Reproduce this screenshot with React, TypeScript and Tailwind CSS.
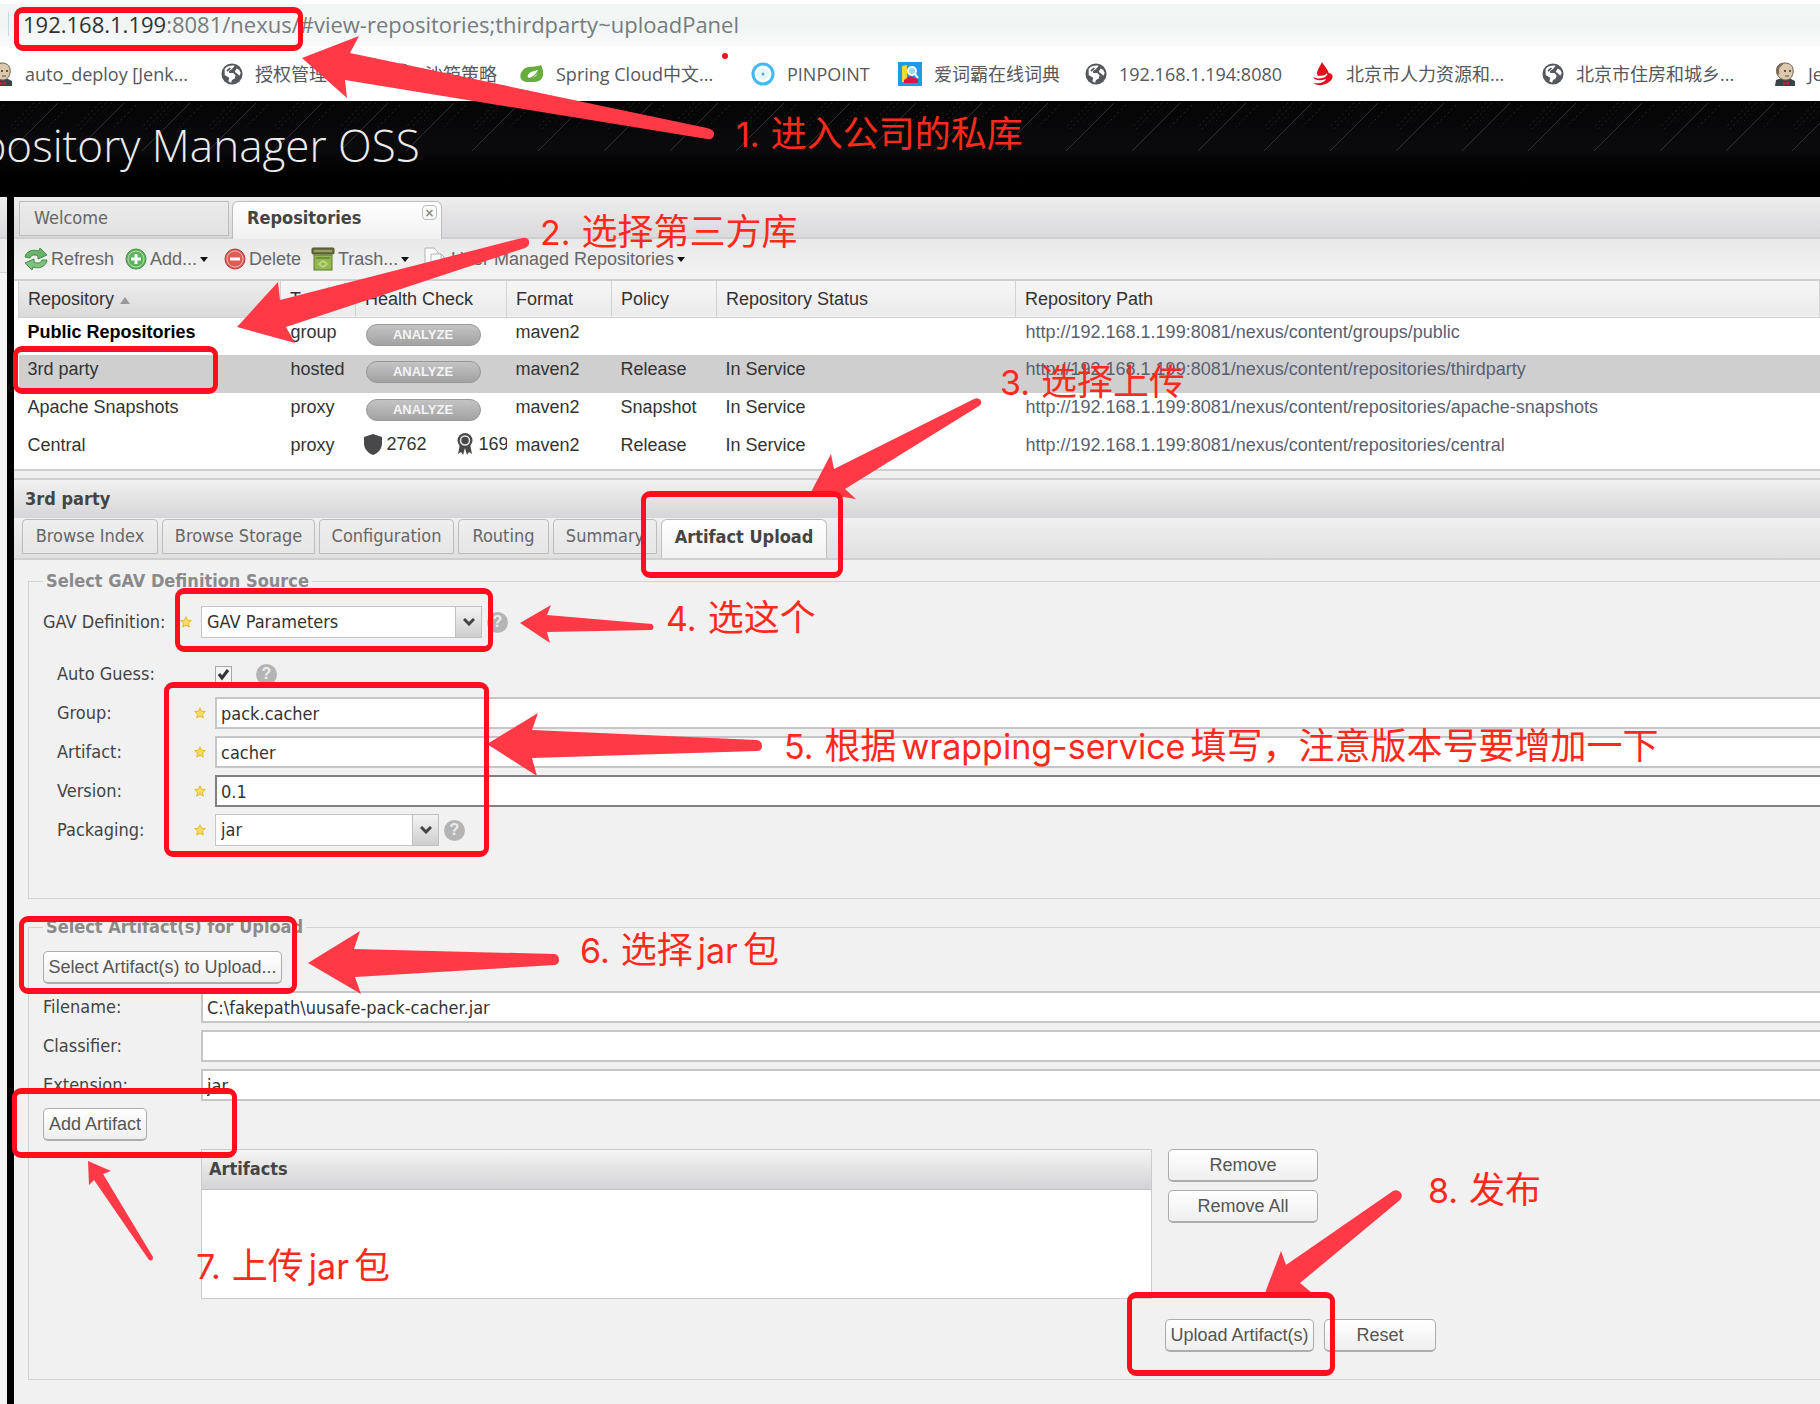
import React from "react";

const TAHOMA = "font-['DejaVu_Sans_Condensed','Open_Sans',sans-serif]";
const ARIAL = "font-['Liberation_Sans',Arial,sans-serif]";
const SEGOE = "font-['Open_Sans','Noto_Sans_CJK_SC',sans-serif]";

/* ---------- icons ---------- */

function Globe() {
  return (
    <svg viewBox="0 0 24 24" className="h-6 w-[22px] shrink-0">
      <circle cx="12" cy="12" r="11.5" fill="#55585c" />
      <path
        d="M4 6.500 C7 3 11 2.500 15 3 L12 6.500 L8.500 9 L9 11 L13.500 11 L16 13.500 L15 17 L12 18.500 L11 21.500 L8 20 L9 16 L4 13 Z"
        fill="#fff"
      />
      <path d="M17 6 L20 7.500 L21.500 11 L20 14 L18 12 L15 9.500 Z" fill="#fff" />
      <path d="M6 8 L9.500 5 L11 6 L7 9.500 Z" fill="#55585c" />
    </svg>
  );
}

function Jenkins() {
  return (
    <svg viewBox="0 0 22 24" className="h-6 w-[22px] shrink-0">
      <path d="M1 24 L2 18 L8 16 L15 16 L21 19 L21 24 Z" fill="#39444a" />
      <path d="M9 20 L12 21 L15 19 L15 23 L12 22 L9 23 Z" fill="#c8202c" />
      <path d="M3 12 C1 4 6 1 11 1 C17 1 20 5 19 11 C18 16 15 18 12 18 C8 18 5 16 3 12 Z" fill="#dcc9ad" stroke="#6e6052" />
      <path d="M3 12 C1 4 5 1 10 1 C8 4 5 5 5 8 C5 10 6 12 4 13 Z" fill="#7d6b58" />
      <circle cx="11" cy="9" r="1" fill="#3b3029" />
      <circle cx="16" cy="9" r="1" fill="#3b3029" />
      <path d="M11 14 L15 14" stroke="#5a4a3c" />
    </svg>
  );
}

function SpringLeaf() {
  return (
    <svg viewBox="0 0 24 24" className="h-6 w-6 shrink-0">
      <path d="M3 8 C6 3 17 6 21 3 C25 11 24 20 14 20 L6 20 C-1 19 -1 12 3 8 Z" fill="#67ad3e" />
      <path d="M8 13 C10 9 15 9 18 8 C18 14 14 16 10 16 C8 16 7 14.500 8 13 Z" fill="#fff" />
      <path d="M3 17 C9 18 15 15 19 8" stroke="#67ad3e" strokeWidth="1.500" fill="none" />
    </svg>
  );
}

function Pinpoint() {
  return (
    <svg viewBox="0 0 24 24" className="h-6 w-6 shrink-0">
      <circle cx="12" cy="12" r="10" fill="#fff" stroke="#45b8ee" strokeWidth="3" />
      <circle cx="12" cy="12" r="6" fill="#e6f6fd" />
      <circle cx="12" cy="12" r="1.500" fill="#5aa8d8" />
    </svg>
  );
}

function Dictionary() {
  return (
    <svg viewBox="0 0 24 24" className="h-6 w-6 shrink-0">
      <rect width="24" height="24" fill="#1e9ae8" />
      <path d="M4 4 L9 3 L9 20 L4 20 Z" fill="#f8d738" />
      <path d="M6 18 L12 14 L20 17 L20 21 L6 21 Z" fill="#d8144e" />
      <circle cx="14" cy="9" r="4" fill="#9ad6fa" stroke="#fff" strokeWidth="2" />
      <path d="M17 12 L20 16" stroke="#fff" strokeWidth="2" />
    </svg>
  );
}

function Flame() {
  return (
    <svg viewBox="0 0 22 24" className="h-6 w-[22px] shrink-0">
      <path d="M10 0 C12 4 17 8 17 13 L6 14 C3 10 8 5 10 0 Z" fill="#e0101c" />
      <path d="M1 15 C6 18 14 14 16 11 C22 11 22 17 17 20 C12 24 4 24 2 21 C8 22 13 20 14 17 C9 19 3 19 1 15 Z" fill="#e0101c" />
      <path d="M4 15 C8 17 13 15 15 12" stroke="#fff" strokeWidth="1.500" fill="none" />
    </svg>
  );
}

function RefreshIcon() {
  return (
    <svg viewBox="0 0 24 22" className="h-[22px] w-6">
      <path d="M1 9 C2 3 9 1 15 3 L16 0 L23 7 L14 11 L14 8 C10 6 7 7 6 10 Z" fill="#6cb26a" stroke="#3f8f45" />
      <path d="M23 12 C22 19 15 21 9 19 L8 22 L1 15 L10 11 L10 14 C14 16 17 15 18 12 Z" fill="#7fc07c" stroke="#3f8f45" />
    </svg>
  );
}

function AddIcon() {
  return (
    <svg viewBox="0 0 22 22" className="h-[22px] w-[22px]">
      <circle cx="11" cy="11" r="10" fill="#5fb35c" stroke="#3f8f45" />
      <circle cx="11" cy="11" r="8" fill="none" stroke="#b5dfb1" />
      <path d="M11 6 V16 M6 11 H16" stroke="#fff" strokeWidth="3" />
    </svg>
  );
}

function DeleteIcon() {
  return (
    <svg viewBox="0 0 22 22" className="h-[22px] w-[22px]">
      <circle cx="11" cy="11" r="10" fill="#e05a58" stroke="#b83a3a" />
      <circle cx="11" cy="11" r="8" fill="none" stroke="#f3b4b0" />
      <path d="M6 11 H16" stroke="#fff" strokeWidth="3" />
    </svg>
  );
}

function TrashIcon() {
  return (
    <svg viewBox="0 0 24 24" className="h-6 w-6">
      <rect x="1" y="1" width="22" height="6" rx="1" fill="#6b6f3c" stroke="#4c4f2a" />
      <path d="M3 4 H21" stroke="#c9cc9a" />
      <rect x="3" y="8" width="18" height="15" fill="#94b84e" stroke="#5f7a2c" />
      <rect x="5" y="10" width="14" height="2" fill="#6f8f38" />
      <path d="M8 17 L12 14 L16 17 L12 20 Z" fill="none" stroke="#c3da8c" strokeWidth="1.500" />
    </svg>
  );
}

function CopyIcon() {
  return (
    <svg viewBox="0 0 24 24" className="h-6 w-6">
      <path d="M1 1 H10 L14 5 V17 H1 Z" fill="#fbfbfb" stroke="#b3b3b3" />
      <path d="M7 7 H17 L21 11 V23 H7 Z" fill="#fbfbfb" stroke="#b3b3b3" />
      <path d="M17 7 V11 H21" fill="none" stroke="#b3b3b3" />
    </svg>
  );
}

function Caret() {
  return (
    <svg viewBox="0 0 8 5" className="h-[5px] w-2">
      <path d="M0 0 H8 L4 5 Z" fill="#111" />
    </svg>
  );
}

function Star() {
  return (
    <svg viewBox="0 0 12 12" className="h-3 w-3 shrink-0">
      <path
        d="M6 0.800 L7.500 4.200 L11.300 4.600 L8.500 7.200 L9.300 11 L6 9.200 L2.700 11 L3.500 7.200 L0.700 4.600 L4.500 4.200 Z"
        fill="#f7dc62"
        stroke="#e3b92b"
      />
    </svg>
  );
}

function Help() {
  return (
    <span className={`${ARIAL} flex h-[21px] w-[21px] items-center justify-center rounded-full bg-[#b4b4b4] text-base font-bold text-[#ececec]`}>
      ?
    </span>
  );
}

function Shield() {
  return (
    <svg viewBox="0 0 18 21" className="h-[21px] w-[18px] shrink-0">
      <path d="M9 0 L18 3 V9 C18 15 14 19 9 21 C4 19 0 15 0 9 V3 Z" fill="#48484a" />
    </svg>
  );
}

function Award() {
  return (
    <svg viewBox="0 0 18 22" className="h-[22px] w-[18px] shrink-0">
      <path d="M4 11 L2 21 L5 19 L7 22 L9 15 L11 22 L13 19 L16 21 L14 11 Z" fill="#48484a" />
      <circle cx="9" cy="7.500" r="7.500" fill="#48484a" />
      <circle cx="9" cy="7.500" r="4.500" fill="none" stroke="#e8e8e8" strokeWidth="1.500" />
    </svg>
  );
}

/* ---------- browser chrome ---------- */

const bookmarks = [
  { icon: Jenkins, text: "auto_deploy [Jenk...", width: "w-[230px]" },
  { icon: Globe, text: "授权管理", width: "w-[170px]" },
  { icon: Globe, text: "沙箱策略", width: "w-[129px]" },
  { icon: SpringLeaf, text: "Spring Cloud中文...", width: "w-[231px]" },
  { icon: Pinpoint, text: "PINPOINT", width: "w-[147px]" },
  { icon: Dictionary, text: "爱词霸在线词典", width: "w-[187px]" },
  { icon: Globe, text: "192.168.1.194:8080", width: "w-[227px]" },
  { icon: Flame, text: "北京市人力资源和...", width: "w-[230px]" },
  { icon: Globe, text: "北京市住房和城乡...", width: "w-[232px]" },
  { icon: Jenkins, text: "Jenkins", width: "w-[100px]" },
];

function BrowserBar() {
  return (
    <div className={`${SEGOE} bg-white`}>
      <div className="flex h-[46px] items-center border-t-4 border-white bg-gradient-to-b from-[#f3f6f4] via-[#f0f5f3] to-[#fafafa] pb-[2px] pl-2">
        <div className="mr-[14px] h-6 w-px bg-gray-300" />
        <p className="text-[22px] leading-7 text-[#777b80]">
          <span className="text-[#2f3236]">192.168.1.199</span>:8081/nexus/#view-repositories;thirdparty~uploadPanel
        </p>
      </div>
      <nav className="-ml-[9px] flex h-[55px] items-center overflow-hidden">
        {bookmarks.map(({ icon: Icon, text, width }) => (
          <a key={text} href="#" className={`${width} flex shrink-0 items-center gap-3 text-lg leading-6 whitespace-nowrap text-[#55585c]`}>
            <Icon />
            {text}
          </a>
        ))}
      </nav>
    </div>
  );
}

function Banner() {
  return (
    <header className="relative h-24 overflow-hidden bg-gradient-to-b from-[#050506] via-[#0b0b0d] to-black">
      <svg className="absolute inset-0 h-full w-full">
        <defs>
          <pattern id="hatch" width="66" height="96" x="4" patternUnits="userSpaceOnUse">
            <path d="M54 2 L6 50" stroke="#2e2e32" />
            <path d="M36 2 L10 28 M30 2 L6 26 M66 4 L44 26" stroke="#242427" strokeDasharray="2 3" />
            <path d="M42 2 L22 22" stroke="#222225" strokeDasharray="1 3" />
          </pattern>
        </defs>
        <rect width="100%" height="96" fill="url(#hatch)" />
      </svg>
      <h1 className={`${SEGOE} relative -ml-[44px] pt-[14px] text-[44px] leading-[60px] font-light whitespace-nowrap text-[#ececec]`}>
        epository Manager OSS
      </h1>
    </header>
  );
}

/* ---------- repository list ---------- */

function TopTabs() {
  return (
    <div className={`${TAHOMA} flex h-[42px] items-start gap-[3px] border-b-2 border-[#cfcfd1] bg-gradient-to-b from-[#ededee] to-[#dadadc] pt-1 pl-[5px] text-lg leading-6 text-[#666]`}>
      <button className="h-[35px] w-[210px] border border-[#bdbdbf] bg-gradient-to-b from-[#ebebeb] to-[#e2e2e2] pb-[2px] pl-[14px] text-left">
        Welcome
      </button>
      <button className="flex h-[38px] w-[210px] items-start justify-between rounded-t-md border border-b-0 border-[#bdbdbf] bg-gradient-to-b from-white to-[#f1f1f1] pr-1 pl-[14px] text-left font-bold text-[#444]">
        <span className="pt-[4px]">Repositories</span>
        <span className="mt-[3px] flex h-[15px] w-[15px] items-center justify-center rounded-sm border border-[#bbb] text-[13px] font-bold text-[#888]">×</span>
      </button>
    </div>
  );
}

function ToolButton({ icon, label, caret, width }: { icon: React.ReactNode; label: string; caret?: boolean; width: string }) {
  return (
    <button className={`${width} flex shrink-0 items-center gap-[3px] whitespace-nowrap`}>
      {icon}
      {label}
      {caret && <Caret />}
    </button>
  );
}

function Toolbar() {
  return (
    <div className={`${ARIAL} flex h-[42px] items-center border-b-2 border-[#cfcfd1] bg-gradient-to-b from-[#e9e9ea] to-[#f3f3f4] pl-[10px] text-lg text-[#666]`}>
      <ToolButton icon={<RefreshIcon />} label="Refresh" width="w-[101px]" />
      <ToolButton icon={<AddIcon />} label="Add..." caret width="w-[99px]" />
      <ToolButton icon={<DeleteIcon />} label="Delete" width="w-[87px]" />
      <ToolButton icon={<TrashIcon />} label="Trash..." caret width="w-[113px]" />
      <ToolButton icon={<CopyIcon />} label="User Managed Repositories" caret width="w-[270px]" />
    </div>
  );
}

const base = "http://192.168.1.199:8081/nexus/content/";
const repositories = [
  { name: "Public Repositories", type: "group", policy: "", status: "", path: "groups/public" },
  { name: "3rd party", type: "hosted", policy: "Release", status: "In Service", path: "repositories/thirdparty" },
  { name: "Apache Snapshots", type: "proxy", policy: "Snapshot", status: "In Service", path: "repositories/apache-snapshots" },
  { name: "Central", type: "proxy", policy: "Release", status: "In Service", path: "repositories/central" },
];

function Health({ name }: { name: string }) {
  if (name === "Central") {
    return (
      <div className="-mt-1 -ml-[2px] flex items-center overflow-hidden">
        <Shield />
        <span className="ml-[5px] w-[69px] shrink-0">2762</span>
        <Award />
        <span className="ml-[5px] shrink-0">1690</span>
      </div>
    );
  }
  return (
    <button className="block h-[22px] w-[115px] rounded-full border border-[#989898] bg-gradient-to-b from-[#c4c4c4] to-[#a2a2a2] text-[13px] leading-5 font-bold text-[#f4f4f4]">
      ANALYZE
    </button>
  );
}

function RepositoryGrid() {
  return (
    <div className={`${ARIAL} h-[190px] overflow-hidden border-b-2 border-[#cfcfd1] bg-white pl-1 text-lg leading-6 text-[#333]`}>
      <table className="w-full table-fixed border-collapse">
        <colgroup>
          <col className="w-[262px]" />
          <col className="w-[75px]" />
          <col className="w-[151px]" />
          <col className="w-[105px]" />
          <col className="w-[105px]" />
          <col className="w-[299px]" />
          <col />
        </colgroup>
        <thead>
          <tr className="h-9 border-b border-[#cfcfcf] bg-gradient-to-b from-[#f6f6f6] to-[#ebebeb] text-left">
            {["Repository", "Type", "Health Check", "Format", "Policy", "Repository Status", "Repository Path"].map((h, i) => (
              <th key={h} className={`${i === 0 ? "bg-gradient-to-b from-[#eeeeee] to-[#dadadb]" : ""} border-x border-[#d3d3d3] p-0 pl-[9px] font-normal`}>
                <span className="flex items-center gap-[6px]">
                  {h}
                  {i === 0 && (
                    <svg viewBox="0 0 10 7" className="mt-1 h-[7px] w-[10px]">
                      <path d="M0 7 L5 0 L10 7 Z" fill="#999" />
                    </svg>
                  )}
                </span>
              </th>
            ))}
          </tr>
        </thead>
        <tbody>
          {repositories.map((r, i) => (
            <tr key={r.name} className={`${i === 1 ? "bg-[#cfcfd0]" : ""} h-[38px] align-top`}>
              <td className={`${i === 0 ? "font-bold text-black" : ""} pt-[2px] pl-[9px]`}>{r.name}</td>
              <td className="pt-[2px] pl-[10px]">{r.type}</td>
              <td className="overflow-hidden pt-[6px] pl-[10px] leading-[21px]">
                <Health name={r.name} />
              </td>
              <td className="pt-[2px] pl-[9px]">maven2</td>
              <td className="pt-[2px] pl-[9px]">{r.policy}</td>
              <td className="pt-[2px] pl-[9px]">{r.status}</td>
              <td className="pt-[2px] pl-[10px] whitespace-nowrap">
                <a href="#" className="text-[#5a5f70]">{base + r.path}</a>
              </td>
            </tr>
          ))}
        </tbody>
      </table>
    </div>
  );
}

/* ---------- detail panel ---------- */

const detailTabs = [
  { label: "Browse Index", width: "w-[136px]" },
  { label: "Browse Storage", width: "w-[153px]" },
  { label: "Configuration", width: "w-[135px]" },
  { label: "Routing", width: "w-[91px]" },
  { label: "Summary", width: "w-[104px]" },
];

function DetailTabs() {
  return (
    <div className={`${TAHOMA} flex h-[42px] items-start gap-1 border-b-2 border-[#d0d0d0] bg-gradient-to-b from-[#f0f0f0] to-[#e0e0e0] pt-px pl-2 text-lg leading-6 text-[#666]`}>
      {detailTabs.map((t) => (
        <button key={t.label} className={`${t.width} h-[35px] shrink-0 rounded-t border border-[#bdbdbf] bg-gradient-to-b from-[#eeeeee] to-[#e6e6e6] pb-px whitespace-nowrap`}>
          {t.label}
        </button>
      ))}
      <button className="h-[39px] w-[166px] shrink-0 rounded-t-md border border-b-0 border-[#bdbdbf] bg-gradient-to-b from-white to-[#f1f1f1] pb-[5px] font-bold whitespace-nowrap text-[#444]">
        Artifact Upload
      </button>
    </div>
  );
}

function Field({ id, label, starred, nested, children }: { id: string; label: string; starred?: boolean; nested?: boolean; children: React.ReactNode }) {
  return (
    <div className={`${nested ? "pl-[14px]" : ""} flex h-8 items-center`}>
      <label htmlFor={id} className="flex w-[158px] shrink-0 items-center justify-between pr-[9px] whitespace-nowrap">
        {label}
        {starred && <Star />}
      </label>
      {children}
    </div>
  );
}

function TextField({ id, value, focused }: { id: string; value: string; focused?: boolean }) {
  return (
    <input
      id={id}
      defaultValue={value}
      className={`${focused ? "border-[#808080]" : "border-[#c6c6c8]"} h-8 min-w-0 flex-1 border-2 border-r-0 bg-white px-1 text-[#333] outline-none`}
    />
  );
}

function Dropdown({ id, value, width }: { id: string; value: string; width: string }) {
  return (
    <div className={`${width} relative mr-[5px] h-8 shrink-0`}>
      <select id={id} defaultValue={value} className="h-8 w-full appearance-none border border-[#c6c6c8] bg-white pl-[5px] text-[#333]">
        <option>{value}</option>
      </select>
      <span className="pointer-events-none absolute top-0 right-0 flex h-8 w-[27px] items-center justify-center border border-[#c0c0c0] bg-gradient-to-b from-[#f4f4f4] to-[#cecece]">
        <svg viewBox="0 0 12 8" className="h-2 w-3">
          <path d="M1 1 L6 6 L11 1" fill="none" stroke="#444" strokeWidth="3" />
        </svg>
      </span>
    </div>
  );
}

function Checkbox({ id }: { id: string }) {
  return (
    <span className="relative mr-6 h-[17px] w-[17px]">
      <input id={id} type="checkbox" defaultChecked className="peer block h-[17px] w-[17px] appearance-none border border-[#a8a8a8] bg-[#f4f4f4]" />
      <svg viewBox="0 0 17 17" className="pointer-events-none absolute inset-0 hidden h-[17px] w-[17px] peer-checked:block">
        <path d="M4 8 L7 12 L13 4" fill="none" stroke="#333" strokeWidth="3" />
      </svg>
    </span>
  );
}

function PlainButton({ children, width }: { children: React.ReactNode; width: string }) {
  return (
    <button className={`${ARIAL} ${width} block h-[33px] rounded-[5px] border border-b-2 border-[#adadad] bg-gradient-to-b from-white to-[#efefef] text-lg leading-7 whitespace-nowrap text-[#555]`}>
      {children}
    </button>
  );
}

function UploadForm() {
  return (
    <form className={`${TAHOMA} bg-[#f1f1f2] pt-[9px] pb-[27px] pl-[14px] text-lg leading-6 text-[#444]`}>
      <fieldset className="min-w-0 border border-r-0 border-[#d2d2d4] pb-[52px] pl-[14px]">
        <legend className="px-[3px] font-bold text-[#8a8a8c]">Select GAV Definition Source</legend>
        <div className="pt-[13px]">
          <Field id="gav" label="GAV Definition:" starred>
            <Dropdown id="gav" value="GAV Parameters" width="w-[281px]" />
            <Help />
          </Field>
        </div>
        <div className="flex flex-col gap-[7px] pt-5">
          <Field id="guess" label="Auto Guess:" nested>
            <Checkbox id="guess" />
            <Help />
          </Field>
          <Field id="group" label="Group:" starred nested>
            <TextField id="group" value="pack.cacher" />
          </Field>
          <Field id="artifact" label="Artifact:" starred nested>
            <TextField id="artifact" value="cacher" />
          </Field>
          <Field id="version" label="Version:" starred nested>
            <TextField id="version" value="0.1" focused />
          </Field>
          <Field id="packaging" label="Packaging:" starred nested>
            <Dropdown id="packaging" value="jar" width="w-[224px]" />
            <Help />
          </Field>
        </div>
      </fieldset>
      <fieldset className="mt-4 min-w-0 border border-r-0 border-[#d2d2d4] pb-[27px] pl-[14px]">
        <legend className="px-[3px] font-bold text-[#8a8a8c]">Select Artifact(s) for Upload</legend>
        <div className="flex flex-col gap-[7px] pt-3">
          <PlainButton width="w-[239px]">Select Artifact(s) to Upload...</PlainButton>
          <Field id="filename" label="Filename:">
            <TextField id="filename" value="C:\fakepath\uusafe-pack-cacher.jar" />
          </Field>
          <Field id="classifier" label="Classifier:">
            <TextField id="classifier" value="" />
          </Field>
          <Field id="extension" label="Extension:">
            <TextField id="extension" value="jar" />
          </Field>
          <PlainButton width="w-[104px]">Add Artifact</PlainButton>
        </div>
        <div className="mt-2 ml-[158px] flex items-start gap-4">
          <section className="h-[150px] w-[951px] border border-[#cbcbcd] bg-white">
            <h2 className="h-10 border-b border-[#c2c2c4] bg-gradient-to-b from-[#f4f4f4] to-[#d4d4d6] pt-[7px] pl-[7px] font-bold">Artifacts</h2>
          </section>
          <div className="flex flex-col gap-2">
            <PlainButton width="w-[150px]">Remove</PlainButton>
            <PlainButton width="w-[150px]">Remove All</PlainButton>
          </div>
        </div>
        <div className="mt-5 ml-[1122px] flex gap-[10px]">
          <PlainButton width="w-[149px]">Upload Artifact(s)</PlainButton>
          <PlainButton width="w-[112px]">Reset</PlainButton>
        </div>
      </fieldset>
    </form>
  );
}

/* ---------- walkthrough annotations ---------- */

const arrows = [
  "M302 58 L359 36 L350 53 L707 128 Q715 130 714 135 Q713 140 707 139 L345 80 L347 98 Z",
  "M237 327 L278 282 L280 300 L522 238 Q528 237 529 241 Q530 246 525 248 L286 327 L295 343 Z",
  "M811 492 L831 454 L834 469 L974 399 Q979 397 981 401 Q982 404 979 406 L845 489 L856 499 Z",
  "M520 623 L551 605 L547 615 L652 624 Q655 627 652 630 L547 632 L550 643 Z",
  "M487 744 L538 713 L532 730 L757 740 Q762 741 762 746 Q762 751 757 751 L532 758 L537 776 Z",
  "M308 963 L360 931 L354 949 L555 954 Q559 955 559 960 Q559 964 555 965 L355 977 L361 994 Z",
  "M88 1161 L111 1171 L103 1174 L153 1257 Q153 1262 149 1260 L94 1180 L89 1185 Z",
  "M1265 1293 L1281 1251 L1286 1265 L1393 1191 Q1398 1189 1401 1193 Q1403 1196 1400 1200 L1300 1283 L1312 1293 Z",
];

const frames = [
  "top-[7px] left-[14px] h-[44px] w-[289px]",
  "top-[346px] left-[13px] h-[48px] w-[205px]",
  "top-[491px] left-[641px] h-[87px] w-[202px]",
  "top-[588px] left-[175px] h-[64px] w-[318px]",
  "top-[682px] left-[164px] h-[175px] w-[325px]",
  "top-[916px] left-[19px] h-[78px] w-[278px]",
  "top-[1088px] left-[12px] h-[70px] w-[225px]",
  "top-[1292px] left-[1127px] h-[84px] w-[208px]",
];

const notes = [
  { step: "1.", before: "进入公司的私库", place: "top-[114px] left-[736px]" },
  { step: "2.", before: "选择第三方库", place: "top-[212px] left-[540px]" },
  { step: "3.", before: "选择上传", place: "top-[362px] left-[1000px]" },
  { step: "4.", before: "选这个", place: "top-[598px] left-[666px]" },
  { step: "5.", before: "根据", latin: "wrapping-service", after: "填写，注意版本号要增加一下", place: "top-[726px] left-[784px]" },
  { step: "6.", before: "选择", latin: "jar", after: "包", place: "top-[930px] left-[580px]" },
  { step: "7.", before: "上传", latin: "jar", after: "包", place: "top-[1246px] left-[196px]" },
  { step: "8.", before: "发布", place: "top-[1170px] left-[1428px]" },
];

function Annotations() {
  return (
    <div className="pointer-events-none absolute inset-0 overflow-hidden">
      <svg className="absolute inset-0 h-full w-full">
        {arrows.map((d) => (
          <path key={d} d={d} fill="#ff3a46" />
        ))}
        <circle cx="725" cy="56" r="3" fill="#ff1020" />
      </svg>
      {frames.map((place) => (
        <div key={place} className={`${place} absolute rounded-[9px] border-x-[5px] border-y-[6px] border-[#ff0f1e]`} />
      ))}
      {notes.map((n) => (
        <p key={n.place} className={`${n.place} absolute font-[Inter,'Noto_Sans_CJK_SC',sans-serif] text-4xl leading-10 font-normal whitespace-nowrap text-[#ff2a1c]`}>
          <span className="mr-[11px] text-[34px]">{n.step}</span>
          {n.before}
          {n.latin && <span className="mx-[5px] text-[34px]">{n.latin}</span>}
          {n.after}
        </p>
      ))}
    </div>
  );
}

export default function App() {
  return (
    <div className="relative flex min-h-screen flex-col overflow-hidden bg-[#f1f1f2]">
      <BrowserBar />
      <Banner />
      <div className="flex flex-1">
        <aside className="w-[7px] shrink-0 bg-[#f4f4f5]">
          <div className="h-[42px] border-b-2 border-[#cfcfd1] bg-gradient-to-b from-[#ededee] to-[#dadadc]" />
          <div className="h-[34px] border-b border-[#cfcfd1] bg-[#ececed]" />
        </aside>
        <div className="w-[7px] shrink-0 bg-black" />
        <main className="min-w-0 flex-1">
          <TopTabs />
          <Toolbar />
          <RepositoryGrid />
          <div className="h-[9px] border-b-2 border-[#d0d0d0] bg-[#f0f0f0]" />
          <h2 className={`${TAHOMA} h-[38px] bg-gradient-to-b from-[#f1f1f1] to-[#d6d6d8] pt-[7px] pl-[11px] text-lg leading-6 font-bold text-[#444]`}>
            3rd party
          </h2>
          <DetailTabs />
          <UploadForm />
        </main>
      </div>
      <Annotations />
    </div>
  );
}
